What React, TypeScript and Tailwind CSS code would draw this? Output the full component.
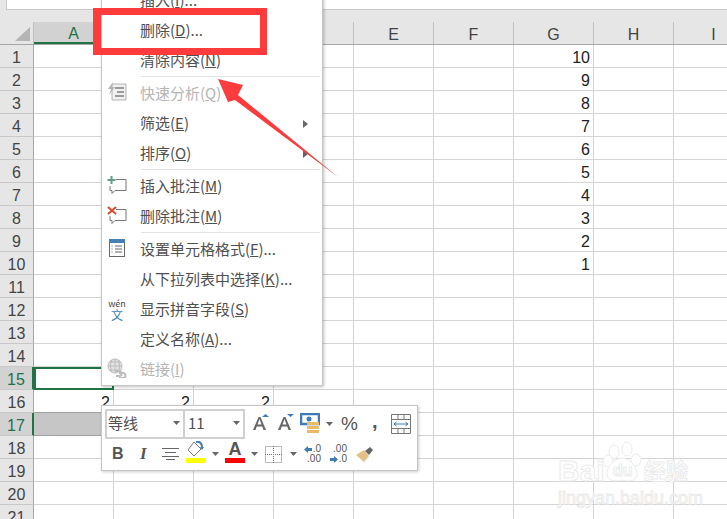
import React from 'react';

const columns = ['A', 'B', 'C', 'D', 'E', 'F', 'G', 'H', 'I'];
const rows = Array.from({ length: 21 }, (_, i) => i + 1);

const cellValue = (col: string, row: number) => {
  if (col === 'G' && row <= 10) return String(11 - row);
  if (row === 16 && (col === 'A' || col === 'B' || col === 'C')) return '2';
  return '';
};

const cellClass = (col: string, row: number) => {
  if (row === 15 && col === 'A') return 'border-2 border-[#217346]';
  if (row === 17 && ['A', 'B', 'C'].includes(col)) return 'border-b border-r border-b-[#a0a0a0] border-r-[#c6c6c6] bg-[#c6c6c6]';
  if (row === 16 && ['A', 'B', 'C'].includes(col)) return 'border-b border-r border-b-[#a0a0a0] border-r-[#d4d4d4]';
  return 'border-b border-r border-[#d4d4d4]';
};

const Caret = ({ className = '' }: { className?: string }) => (
  <svg width="7" height="4" viewBox="0 0 7 4" className={className}>
    <path d="M0 0h7L3.500 4z" fill="#666" />
  </svg>
);

const QuickIcon = () => (
  <svg width="20" height="20" viewBox="0 0 20 20" fill="none">
    <path d="M5 2h14v16H5z" fill="#f0f0f0" stroke="#b4b4b4" />
    <path d="M8 5h9v2H8zM10 9h7v2h-7zM8 13h9v2H8z" fill="#9c9c9c" />
    <path d="M6 0 1 7h3l-2 6 6-8H5z" fill="#b4b4b4" />
  </svg>
);

const CommentIcon = ({ remove }: { remove?: boolean }) => (
  <svg width="20" height="18" viewBox="0 0 20 18" fill="none">
    <path d="M9 3.500h10v11H8l-3 3v-3H3V10" stroke="#777" strokeWidth="1" />
    {remove ? (
      <path d="M1 1l8 7M9 1 1 8" stroke="#d9482b" strokeWidth="2" />
    ) : (
      <path d="M4.500 0v8M.5 4h8" stroke="#5f9e84" strokeWidth="2" />
    )}
  </svg>
);

const FormatIcon = () => (
  <svg width="16" height="18" viewBox="0 0 16 18" fill="none">
    <rect x=".5" y=".5" width="15" height="17" stroke="#666" fill="#fff" />
    <rect x="0" y="0" width="16" height="4" fill="#4a7fb5" />
    <path d="M6 7h7M6 10h7M6 13h7" stroke="#666" />
    <path d="M2.500 7h1M2.500 10h1M2.500 13h1" stroke="#666" />
  </svg>
);

const LinkIcon = () => (
  <svg width="20" height="20" viewBox="0 0 20 20" fill="none" stroke="#bcbcbc">
    <circle cx="8" cy="8" r="7" fill="#e4e4e4" />
    <path d="M1 8h14M8 1v14M3 4h10M3 12h10M5 2c-2 4-2 8 0 12M11 2c2 4 2 8 0 12" />
    <path d="M8 13h4a2.500 2.500 0 0 1 0 5H9M12 15h4a2 2 0 0 1 0 5h-4" strokeWidth="2" />
  </svg>
);

const PinyinIcon = () => (
  <div className="mt-[4px] flex flex-col items-center">
    <span className="h-[9px] text-[9px] leading-[9px] text-[#444]">wén</span>
    <span className="h-[13px] text-[12px] leading-[13px] text-[#3f7cb5]">文</span>
  </div>
);

type MenuItem = {
  label: string;
  key?: string;
  suffix?: string;
  icon?: React.ReactNode;
  disabled?: boolean;
  submenu?: boolean;
  separator?: boolean;
};

const menuItems: MenuItem[] = [
  { label: '插入', key: 'I', suffix: '...' },
  { label: '删除', key: 'D', suffix: '...' },
  { label: '清除内容', key: 'N', separator: true },
  { label: '快速分析', key: 'Q', icon: <QuickIcon />, disabled: true },
  { label: '筛选', key: 'E', submenu: true },
  { label: '排序', key: 'O', submenu: true, separator: true },
  { label: '插入批注', key: 'M', icon: <CommentIcon /> },
  { label: '删除批注', key: 'M', icon: <CommentIcon remove />, separator: true },
  { label: '设置单元格格式', key: 'F', suffix: '...', icon: <FormatIcon /> },
  { label: '从下拉列表中选择', key: 'K', suffix: '...' },
  { label: '显示拼音字段', key: 'S', icon: <PinyinIcon /> },
  { label: '定义名称', key: 'A', suffix: '...' },
  { label: '链接', key: 'I', icon: <LinkIcon />, disabled: true },
];

const ContextMenu = () => (
  <div className="absolute left-[101px] top-[-15px] w-[222px] border border-[#c6c6c6] bg-white shadow-[1px_1px_3px_rgba(0,0,0,0.25)]">
    {menuItems.map((item, i) => (
      <React.Fragment key={i}>
        <div className={`flex h-[30px] items-center text-[15px] ${item.disabled ? 'text-[#b4b4b4]' : 'text-[#505050]'}`}>
          <div className="flex h-[30px] w-[38px] shrink-0 items-center justify-center pb-[4px] pr-[8px]">{item.icon}</div>
          <span className="flex-1 whitespace-nowrap pb-[2px] leading-[20px]">
            {item.label}(<u>{item.key}</u>){item.suffix}
          </span>
          {item.submenu && (
            <svg width="5" height="8" viewBox="0 0 5 8" className="mr-[14px]">
              <path d="M0 0l5 4-5 4z" fill="#666" />
            </svg>
          )}
        </div>
        {item.separator && (
          <div className="flex h-[3px] items-start pl-[39px] pr-[2px]">
            <div className="h-px w-full bg-[#e2e2e2]" />
          </div>
        )}
      </React.Fragment>
    ))}
  </div>
);

const GrowIcon = ({ shrink }: { shrink?: boolean }) => (
  <svg width="18" height="20" viewBox="0 0 18 20">
    <path d={shrink ? 'M9 0l3.500 3L16 0z' : 'M9 3l3.500-3L16 3z'} fill="#3f7cb5" />
    <path d="M0 16 5.500 3h2L13 16h-2.500l-1.200-3.500H3.700L2.500 16zM4.500 10.500h4L6.500 5z" fill="#666" />
  </svg>
);

const MiniToolbar = () => (
  <div className="absolute left-[101px] top-[405px] h-[66px] w-[317px] border border-[#c6c6c6] bg-white pl-[3px] pt-[3px] text-[#555] shadow-[1px_1px_3px_rgba(0,0,0,0.2)]">
    <div className="flex h-[30px] items-center">
      <div className="flex h-[30px] w-[80px] items-center justify-between border-2 border-[#d0d0d0] pb-[2px] pl-[1px] pr-[3px] text-[15px] text-[#505050]">
        等线
        <Caret />
      </div>
      <div className="flex h-[30px] w-[60px] items-center justify-between border-2 border-l-0 border-[#d0d0d0] pb-[2px] pl-[3px] pr-[3px] text-[15px] text-[#505050]">
        11
        <Caret />
      </div>
      <div className="ml-[8px]"><GrowIcon /></div>
      <div className="ml-[7px]"><GrowIcon shrink /></div>
      <svg width="20" height="23" viewBox="0 0 20 23" className="ml-[4px]">
        <rect x="1" y="1" width="18" height="10" fill="#fff" stroke="#3f7cb5" strokeWidth="2.500" />
        <circle cx="9" cy="6" r="2.500" fill="#3f7cb5" />
        <rect x="7" y="9" width="12" height="3" fill="#e9b96e" />
        <rect x="7" y="13" width="12" height="3" fill="#e9b96e" />
        <rect x="7" y="17" width="12" height="3" fill="#e9b96e" />
      </svg>
      <Caret className="ml-[6px]" />
      <span className="ml-[8px] w-[17px] font-['Liberation_Sans',sans-serif] text-[19px]">%</span>
      <span className="ml-[14px] w-[6px] pb-[6px] font-['Liberation_Sans',sans-serif] text-[20px] font-bold leading-none">,</span>
      <svg width="20" height="20" viewBox="0 0 20 20" fill="none" className="ml-[13px]">
        <path d="M.5.500h19v19H.5zM0 5.500h20M0 14.500h20M7 .5v5M13 .5v5M7 14.500v5M13 14.500v5" stroke="#777" />
        <path d="M3 10h14M5.500 8 3 10l2.500 2M14.500 8 17 10l-2.500 2" stroke="#3f7cb5" />
      </svg>
    </div>
    <div className="mt-[2px] flex h-[26px] items-center">
      <span className="ml-[7px] w-[12px] font-['Liberation_Sans',sans-serif] text-[16px] font-bold">B</span>
      <span className="ml-[16px] w-[10px] font-['Liberation_Serif',serif] text-[17px] font-bold italic">I</span>
      <svg width="17" height="12" viewBox="0 0 17 12" className="ml-[12px]" stroke="#666">
        <path d="M0 .5h17M3 4.500h11M0 8.500h17M4 11.500h9" />
      </svg>
      <div className="mb-[4px] ml-[7px] flex w-[20px] flex-col items-center">
        <svg width="20" height="17" viewBox="0 0 20 17" fill="none">
          <path d="M8 1 2 9l6 6 7-7z" stroke="#777" fill="#fff" />
          <path d="M10 1c3-1 6 1 6 5" stroke="#3f7cb5" strokeWidth="2" />
          <path d="M14 6h4l-2 3z" fill="#3f7cb5" />
        </svg>
        <div className="h-[5px] w-[20px] bg-[#ffff00]" />
      </div>
      <Caret className="ml-[6px]" />
      <div className="mb-[4px] ml-[6px] flex w-[20px] flex-col items-center">
        <span className="h-[17px] font-['Liberation_Sans',sans-serif] text-[18px] font-bold leading-[17px]">A</span>
        <div className="h-[5px] w-[20px] bg-[#ff0000]" />
      </div>
      <Caret className="ml-[6px]" />
      <svg width="17" height="17" viewBox="0 0 17 17" fill="none" stroke="#777" strokeDasharray="1 1" className="ml-[7px]">
        <path d="M.5.500h16v16H.5zM0 8.500h17M8.500 0v17" />
      </svg>
      <Caret className="ml-[8px]" />
      <div className="ml-[8px] flex w-[16px] flex-col items-end font-['Liberation_Sans',sans-serif] text-[10px] leading-[10px]">
        <span className="flex items-center gap-[1px]">
          <svg width="8" height="7" viewBox="0 0 8 7"><path d="M0 3.500 4 0v2h4v3H4v2z" fill="#3f7cb5" /></svg>.0
        </span>
        <span>.00</span>
      </div>
      <div className="ml-[10px] flex w-[16px] flex-col items-end font-['Liberation_Sans',sans-serif] text-[10px] leading-[10px]">
        <span>.00</span>
        <span className="flex items-center gap-[1px]">
          <svg width="8" height="7" viewBox="0 0 8 7"><path d="M8 3.500 4 0v2H0v3h4v2z" fill="#3f7cb5" /></svg>.0
        </span>
      </div>
      <svg width="18" height="16" viewBox="0 0 18 16" className="ml-[9px]">
        <path d="M0 9 8 4l5 6-5 6z" fill="#e6c088" />
        <path d="M9 5l5-4 3 3-4 5z" fill="#666" />
      </svg>
    </div>
  </div>
);

const Watermark = () => (
  <div className="absolute left-[556px] top-[440px] h-[70px] w-[136px] text-white [-webkit-text-stroke:1px_#ebebeb]">
    <span className="absolute left-[2px] top-[15px] font-['Liberation_Sans',sans-serif] text-[30px] font-bold leading-[32px]">Bai</span>
    <svg width="40" height="44" viewBox="0 0 40 44" fill="#fff" stroke="#ebebeb" className="absolute left-[46px] top-0">
      <ellipse cx="12" cy="12" rx="5" ry="7" />
      <ellipse cx="25" cy="9" rx="5" ry="7" />
      <ellipse cx="34" cy="20" rx="5" ry="6" />
      <ellipse cx="6" cy="21" rx="5" ry="6" />
      <path d="M20 18c8 0 16 10 15 17-1 6-8 7-15 5-7 2-14 1-15-5-1-7 7-17 15-17z" />
    </svg>
    <span className="absolute left-[57px] top-[22px] font-['Liberation_Sans',sans-serif] text-[16px] font-bold leading-[18px]">du</span>
    <span className="absolute left-[88px] top-[17px] text-[22px] font-bold leading-[24px]">经验</span>
    <span className="absolute left-[2px] top-[48px] whitespace-nowrap font-['Liberation_Sans',sans-serif] text-[18px] leading-[20px]">jingyan.baidu.com</span>
  </div>
);

const App: React.FC = () => {
  return (
    <div className="relative h-[519px] w-[727px] overflow-hidden bg-white font-['Noto_Sans_CJK_SC',sans-serif]">
      <div className="bg-[#e6e6e6]">
        <div className="ml-[6px] h-[10px] border-b border-l border-[#c8c8c8] bg-white" />
        <div className="h-[12px]" />
      </div>

      <div className="flex h-[23px] border-b border-[#a6a6a6] bg-[#e6e6e6] font-['Liberation_Sans',sans-serif] text-[16px]">
        <div className="flex w-[34px] shrink-0 items-end justify-end border-r border-[#c0c0c0] pb-[3px] pr-[3px]">
          <svg width="15" height="14" viewBox="0 0 15 14">
            <path d="M15 0v14H0z" fill="#b4b4b4" />
          </svg>
        </div>
        {columns.map((col) => (
          <div
            key={col}
            className={`flex w-[80px] shrink-0 items-center justify-center border-r border-[#c0c0c0] pt-[3px] ${
              col === 'A' ? 'border-b-2 border-b-[#217346] bg-[#d2d2d2] text-[#217346]' : 'text-[#444]'
            }`}
          >
            {col}
          </div>
        ))}
      </div>

      {rows.map((row) => (
        <div key={row} className="flex h-[23px] font-['Liberation_Sans',sans-serif] text-[16px] text-[#222]">
          <div
            className={`flex w-[34px] shrink-0 items-center justify-center border-b border-r border-b-[#c8c8c8] pt-[3px] ${
              row === 15 || row === 17
                ? 'border-r-2 border-r-[#217346] bg-[#d2d2d2] text-[#217346]'
                : 'border-r-[#a6a6a6] bg-[#e6e6e6] text-[#444]'
            }`}
          >
            {row}
          </div>
          {columns.map((col) => (
            <div
              key={col}
              className={`flex w-[80px] shrink-0 items-center justify-end pr-[3px] pt-[3px] ${cellClass(col, row)}`}
            >
              {cellValue(col, row)}
            </div>
          ))}
        </div>
      ))}

      <Watermark />
      <ContextMenu />
      <MiniToolbar />

      <div className="absolute left-[93px] top-[8px] h-[47px] w-[174px] border-[7px] border-l-[8px] border-[#ff3b3b]" />
      <svg width="130" height="110" viewBox="0 0 130 110" className="absolute left-[210px] top-[72px]">
        <path d="M8 7 33 13 28 23 128 105 25 28 18 30z" fill="#fb3c3c" />
      </svg>
    </div>
  );
};

export default App;
